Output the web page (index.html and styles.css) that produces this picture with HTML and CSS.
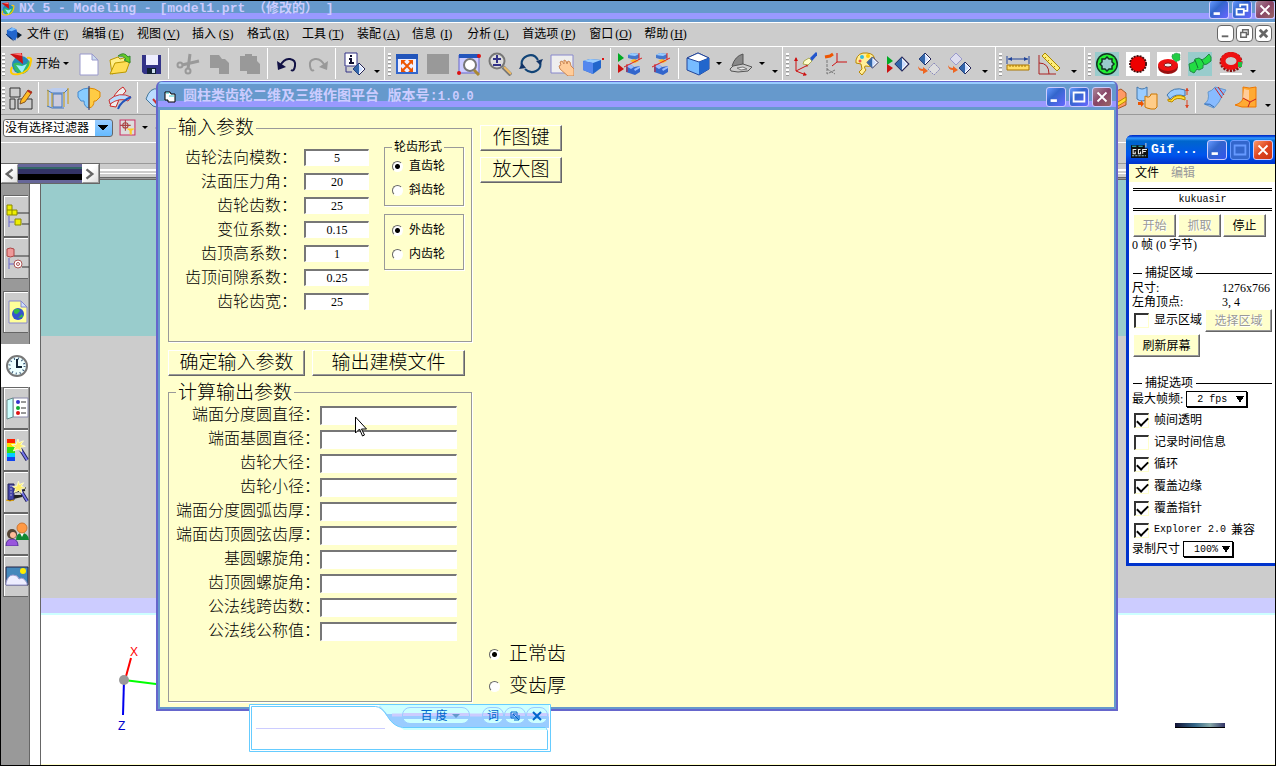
FILE: index.html
```html
<!DOCTYPE html>
<html lang="zh-CN">
<head>
    <meta charset="UTF-8">
    <meta name="viewport" content="width=device-width, initial-scale=1.0">
    <title>NX 5 - Modeling</title>
    <link rel="stylesheet" href="styles.css">
</head>
<body>
    <svg class="sprite" width="0" height="0">
        <symbol id="logo" viewBox="0 0 24 24">
            <circle cx="12" cy="13" r="9" fill="#28b" />
            <path d="M4 12q4-3 8 0t8-4q3 8-3 12-6 4-11-2z" fill="#3b6" />
            <path d="M7 13l6 8 5-9-5 2z" fill="#9ef" />
            <path d="M3 15q-4 9 7 7T22 9q1-4-4-3" fill="none" stroke="#fc0" stroke-width="2" />
            <path d="M1 2l12-1 1 11z" fill="#c11" />
            <path d="M4 2l8-1 1 3z" fill="#f77" />
        </symbol>
        <symbol id="diamond" viewBox="0 0 14 14">
            <path d="M7 1l6 6-6 6-6-6z" fill="#fff" stroke="#225" />
            <path d="M7 1v12L1 7z" fill="#36a" />
            <path d="M7 3l4 4-4 4z" fill="#cdf" />
        </symbol>
        <symbol id="clamp" viewBox="0 0 18 24">
            <path d="M4 3l4-2 7 1v4l-4 2-7-2z" fill="#47c" />
            <path d="M4 3l4-2 7 1-4 2z" fill="#9cf" />
            <path d="M2 14l4-2 4 3 6-1v6l-5 3-9-3z" fill="#36c" />
            <path d="M2 14l4-2 4 3-3 2zM10 17l6-3v2l-5 3z" fill="#9bf" />
            <path d="M6 9l4-2 5 2-4 2z" fill="#fb2" />
            <path d="M0 15L18 6M3 12v8M15 1v7" stroke="#d22" fill="none" />
        </symbol>
        <symbol id="wand" viewBox="0 0 24 24">
            <path d="M14 10l8 13" stroke="#225" stroke-width="4" />
            <path d="M14 10l8 13" stroke="#77e" stroke-width="2" />
            <path d="M12 0l1 4 5-2-3 4 5 2-5 1 1 5-4-3-5 2 2-4-4-3 5 0z" fill="#fe6" stroke="#ffc" />
        </symbol>
    </svg>

    <header class="titlebar">
        <svg class="title-logo" viewBox="0 0 24 24"><use href="#logo" /></svg>
        <h1>NX 5 - Modeling - [model1.prt （修改的） ]</h1>
        <div class="win-buttons">
            <button type="button" aria-label="最小化"><svg viewBox="0 0 20 20"><path d="M4 14h7" stroke-width="3" /></svg></button>
            <button type="button" aria-label="还原"><svg viewBox="0 0 20 20"><path d="M8 7V4h8v7h-3M4 9h8v6H4z" /></svg></button>
            <button type="button" class="close" aria-label="关闭"><svg viewBox="0 0 20 20"><path d="M5 5l10 10M15 5L5 15" /></svg></button>
        </div>
    </header>

    <nav class="menubar">
        <svg class="menu-icon" viewBox="0 0 18 18"><path d="M2 5l5-3 5 2 1 3 4 3-5 3-1 3-5-2-4-3z" fill="#26c" /><path d="M3 5l5-3 4 2-5 2z" fill="#7bf" /><path d="M1 9l6 5M4 12l5 4" stroke="#136" /><path d="M13 7l5 3-5 4z" fill="#123" /></svg>
        <a href="#">文件<span class="key">(<u>F</u>)</span></a>
        <a href="#">编辑<span class="key">(<u>E</u>)</span></a>
        <a href="#">视图<span class="key">(<u>V</u>)</span></a>
        <a href="#">插入<span class="key">(<u>S</u>)</span></a>
        <a href="#">格式<span class="key">(<u>R</u>)</span></a>
        <a href="#">工具<span class="key">(<u>T</u>)</span></a>
        <a href="#">装配<span class="key">(<u>A</u>)</span></a>
        <a href="#">信息<span class="key">(<u>I</u>)</span></a>
        <a href="#">分析<span class="key">(<u>L</u>)</span></a>
        <a href="#">首选项<span class="key">(<u>P</u>)</span></a>
        <a href="#">窗口<span class="key">(<u>O</u>)</span></a>
        <a href="#">帮助<span class="key">(<u>H</u>)</span></a>
        <div class="mdi-buttons">
            <button type="button" aria-label="最小化文档"><svg viewBox="0 0 16 16"><path d="M4 11h7" /></svg></button>
            <button type="button" aria-label="还原文档"><svg viewBox="0 0 16 16"><path d="M6 6V4h6v5h-2M4 7h6v5H4z" stroke-width="1.5" /></svg></button>
            <button type="button" aria-label="关闭文档"><svg viewBox="0 0 16 16"><path d="M4 4l8 8M12 4l-8 8" stroke-width="3" /></svg></button>
        </div>
    </nav>

    <div class="toolbar">
        <div class="group">
            <span class="grip"></span>
            <button type="button" class="tool" aria-label="NX"><svg viewBox="0 0 24 24"><use href="#logo" /></svg></button>
            <button type="button" class="start">开始<i class="caret"></i></button>
            <button type="button" class="tool" aria-label="新建"><svg viewBox="0 0 24 24"><path d="M3 2h12l6 6v15H3z" fill="#fff" stroke="#99c" /><path d="M15 2v6h6z" fill="#cde" stroke="#99c" /></svg></button>
            <button type="button" class="tool" aria-label="打开"><svg viewBox="0 0 24 24"><path d="M2 8l8-3 2 2 7-2v12L4 22z" fill="#fe8" stroke="#b90" /><path d="M2 22l5-11 15-2-4 11z" fill="#fd5" stroke="#b90" /><path d="M10 4q6-5 10 1l2-1v7l-6-3 2-1q-3-4-8-3z" fill="#6c2" stroke="#383" /></svg></button>
            <button type="button" class="tool" aria-label="保存"><svg viewBox="0 0 24 24"><path d="M3 3h19v19H5l-2-2z" fill="#338" /><path d="M7 3h12v10H7z" fill="#eef" /><path d="M8 16h9v6H8z" fill="#123" /><path d="M13 17h3v4h-3z" fill="#cde" /></svg></button>
            <span class="sep"></span>
            <button type="button" class="tool" aria-label="剪切"><svg viewBox="0 0 24 24" fill="none" stroke="#999" stroke-width="2"><circle cx="4" cy="13" r="2.5" /><circle cx="12" cy="19" r="2.5" /><path d="M6 13l17-4M12 17L14 2" stroke-width="3" /></svg></button>
            <button type="button" class="tool" aria-label="复制"><svg viewBox="0 0 24 24"><path d="M3 3h9l3 4h3l4 4v11H12v-6H3z" fill="#999" /></svg></button>
            <button type="button" class="tool" aria-label="粘贴"><svg viewBox="0 0 24 24"><path d="M2 4h5V2h7v2h5v5l3 3v10H9v-3H2z" fill="#999" /></svg></button>
            <span class="sep"></span>
            <button type="button" class="tool" aria-label="撤销"><svg viewBox="0 0 24 24"><path d="M5 14Q9 6 15 7t5 7-4 4" fill="none" stroke="#114" stroke-width="2" /><path d="M2 9l1 9 8-3z" fill="#114" /></svg></button>
            <button type="button" class="tool" aria-label="重做"><svg viewBox="0 0 24 24"><path d="M19 14Q15 6 9 7t-5 7 4 4" fill="none" stroke="#999" stroke-width="2" /><path d="M22 9l-1 9-8-3z" fill="#999" /></svg></button>
            <span class="sep"></span>
            <button type="button" class="tool" aria-label="信息"><svg viewBox="0 0 24 24"><path d="M2 1h12v13H2z" fill="#fff" stroke="#338" /><path d="M8 3v2M6 7h2v4M6 11h5" stroke="#113" stroke-width="2" fill="none" /><path d="M3 15v5h6" stroke="#338" fill="none" /><use href="#diamond" x="9" y="10" width="14" height="14" /></svg></button>
            <button type="button" class="more" aria-label="更多"><i class="caret"></i></button>
        </div>
        <div class="group">
            <span class="grip"></span>
            <button type="button" class="tool" aria-label="适合窗口"><svg viewBox="0 0 24 24"><path d="M2 3h20v18H2z" fill="#eef" stroke="#36c" stroke-width="2" /><path d="M1 2h22v5H1z" fill="#25b" /><path d="M8 10l8 8M16 10l-8 8" stroke="#e50" stroke-width="2" /><path d="M6 8h5l-5 5zM18 8h-5l5 5zM6 20h5l-5-5zM18 20h-5l5-5z" fill="#e50" /></svg></button>
            <button type="button" class="tool" aria-label="选择"><svg viewBox="0 0 24 24"><path d="M1 2h22v20H1z" fill="#999" /></svg></button>
            <button type="button" class="tool" aria-label="缩放窗口"><svg viewBox="0 0 24 24"><path d="M2 3h20v18H2z" fill="#ccf" stroke="#66c" /><path d="M2 2h20v4H2z" fill="#25b" /><circle cx="13" cy="13" r="6" fill="#fff" stroke="#777" stroke-width="2" /><path d="M17 18l5 5" stroke="#a83" stroke-width="3" /><circle cx="2" cy="21" r="2" fill="#d11" /><circle cx="22" cy="4" r="2" fill="#d11" /></svg></button>
            <button type="button" class="tool" aria-label="缩放"><svg viewBox="0 0 24 24"><circle cx="9" cy="9" r="7.5" fill="#ddd" stroke="#777" stroke-width="2" /><path d="M9 3v8M5 7h8M5 13h8" stroke="#338" stroke-width="2" /><path d="M15 15l8 8" stroke="#777" stroke-width="4" /><path d="M16 15l7 7" stroke="#eb6" stroke-width="2" /></svg></button>
            <button type="button" class="tool" aria-label="旋转"><svg viewBox="0 0 24 24" fill="none" stroke="#147" stroke-width="2"><path d="M3 15Q1 7 8 4t11 4M21 9q2 7-4 10T6 17" /><path d="M24 7l-3 6-4-4zM0 17l3-6 4 5z" fill="#136" stroke="none" /></svg></button>
            <button type="button" class="tool" aria-label="平移"><svg viewBox="0 0 24 24"><path d="M1 3h22v18H1z" fill="#eee" stroke="#88c" /><path d="M9 14l2-1-1-3 2-1 2 3V8l2 1 1 3 1-3 2 1 1 4 3 3v7h-6l-8-7z" fill="#fc9" stroke="#c85" /></svg></button>
            <button type="button" class="tool" aria-label="透视"><svg viewBox="0 0 24 24"><path d="M2 9l7-2 11 1v8l-8 6-10-4z" fill="#26c" /><path d="M2 9l7-2 11 1-8 3z" fill="#9cf" /><path d="M2 9l10 2v11L2 18z" fill="#58e" /><path d="M21 6h2v2h-2z" fill="#d11" /></svg></button>
            <span class="sep"></span>
            <button type="button" class="tool" aria-label="显示截面"><svg viewBox="0 0 24 24"><path d="M0 1v9l6-4z" fill="#0a2" /><path d="M0 12v9l6-4z" fill="#c11" /><use href="#clamp" x="6" y="0" width="18" height="24" /></svg></button>
            <button type="button" class="tool" aria-label="编辑截面"><svg viewBox="0 0 24 24"><use href="#clamp" x="3" y="0" width="18" height="24" /></svg></button>
            <span class="sep"></span>
            <button type="button" class="tool" aria-label="着色"><svg viewBox="0 0 24 24"><path d="M1 6l11-5 11 5v11l-10 6-12-5z" fill="#7bf" stroke="#249" /><path d="M1 6l11-5 11 5-10 4z" fill="#fff" stroke="#249" /><path d="M13 10l10-4v11l-10 6z" fill="#26c" /></svg></button>
            <button type="button" class="drop" aria-label="着色选项"><i class="caret"></i></button>
            <button type="button" class="tool" aria-label="面分析"><svg viewBox="0 0 24 24"><path d="M3 14Q6 4 14 2v10L5 16z" fill="#888" stroke="#555" /><path d="M1 17l3-3 10-2 9 3-4 4-10 1-7-1z" fill="#ccc" stroke="#555" /><path d="M8 16l6-1 4 2-6 1z" fill="#eee" stroke="#777" /></svg></button>
            <button type="button" class="drop" aria-label="面分析选项"><i class="caret"></i></button>
            <button type="button" class="more" aria-label="更多"><i class="caret"></i></button>
        </div>
        <div class="group">
            <span class="grip"></span>
            <button type="button" class="tool" aria-label="动态坐标"><svg viewBox="0 0 24 24"><path d="M3 6v13l12-6M3 19l10 4" fill="none" stroke="#c11" /><path d="M1 9l2-4 2 4zM12 12h4l-2 3zM11 20l3 3-4 1z" fill="#c11" /><path d="M11 9l5-3 3 3-4 4-5-1z" fill="#ffc" stroke="#aa5" /><path d="M17 6l6-6 2 2-6 7z" fill="#25c" /></svg></button>
            <button type="button" class="tool" aria-label="坐标原点"><svg viewBox="0 0 24 24" fill="none"><path d="M13 1v9h10M13 10l-5 4" stroke="#c11" /><path d="M3 8v14l8-4M3 17l8 5" stroke="#777" stroke-dasharray="3 1" /><path d="M1 5l5-1 3-2" stroke="#e50" stroke-width="3" /></svg></button>
            <button type="button" class="tool" aria-label="对象显示"><svg viewBox="0 0 24 24"><path d="M1 8Q3 0 12 1t7 8-8 5q-3 0 0 4l-4 5-3-3 3-3-1-5-5-1z" fill="#fe9" stroke="#b80" /><circle cx="7" cy="5" r="2" fill="#3bd" /><circle cx="13" cy="4" r="2" fill="#fc0" /><circle cx="5" cy="9" r="1.5" fill="#e54" /><use href="#diamond" x="11" y="4" width="13" height="13" /></svg></button>
            <button type="button" class="tool" aria-label="显示和隐藏"><svg viewBox="0 0 24 24"><path d="M1 4v9l6-4z" fill="#0a2" /><path d="M1 12v9l6-5z" fill="#c11" /><use href="#diamond" x="8" y="4" width="16" height="16" /></svg></button>
            <button type="button" class="tool" aria-label="隐藏"><svg viewBox="0 0 24 24"><use href="#diamond" x="1" y="0" width="14" height="14" /><path d="M17 11l6 6-6 6-6-6z" fill="#ddd" stroke="#88b" stroke-dasharray="2 1" /><path d="M1 14q1 3 5 3v-2l5 4-5 3v-3q-5 0-5-5z" fill="#e62" /></svg></button>
            <button type="button" class="tool" aria-label="显示"><svg viewBox="0 0 24 24"><path d="M8 1l6 6-6 6-6-6z" fill="#dde" stroke="#99c" /><use href="#diamond" x="10" y="9" width="14" height="14" /><path d="M0 13q1 3 5 3v-2l5 4-5 3v-3q-5 0-5-5z" fill="#e62" /></svg></button>
            <button type="button" class="more wide" aria-label="更多"><i class="caret"></i></button>
        </div>
        <div class="group">
            <span class="grip"></span>
            <button type="button" class="tool" aria-label="测量距离"><svg viewBox="0 0 24 24"><path d="M1 4v8M23 4v8M2 7h20" stroke="#249" fill="none" /><path d="M2 7l4-2v4zM22 7l-4-2v4z" fill="#249" /><path d="M1 13h22v5H1z" fill="#fd6" stroke="#a70" /><path d="M4 13v2M7 13v2M10 13v2M13 13v2M16 13v2M19 13v2" stroke="#a70" /></svg></button>
            <button type="button" class="tool" aria-label="测量角度"><svg viewBox="0 0 24 24"><path d="M2 3v19h17M2 11q10 0 10 11" fill="none" stroke="#a22" /><path d="M5 4l3-3 15 15-3 3z" fill="#fe7" stroke="#a80" /><path d="M9 5l-2 2M12 8l-2 2M15 11l-2 2M18 14l-2 2" stroke="#a80" /></svg></button>
            <button type="button" class="more wide" aria-label="更多"><i class="caret"></i></button>
        </div>
        <div class="group">
            <span class="grip"></span>
            <button type="button" class="tool" aria-label="内齿轮"><svg viewBox="0 0 24 24"><path d="M0 0h24v24H0z" fill="#9cc" /><circle cx="12" cy="12" r="11" fill="#132" /><circle cx="12" cy="12" r="9.5" fill="#2e3" /><path d="M12 5l2 2 3 0 0 3 2 2-2 2 0 3-3 0-2 2-2-2-3 0 0-3-2-2 2-2 0-3 3 0z" fill="#9cc" stroke="#132" stroke-width="1.5" /></svg></button>
            <button type="button" class="tool" aria-label="外齿轮"><svg viewBox="0 0 24 24"><path d="M0 0h24v24H0z" fill="#fff" /><circle cx="12" cy="12" r="8" fill="#e00" stroke="#411" stroke-width="2" stroke-dasharray="2 1" /><circle cx="12" cy="12" r="7" fill="#e00" /></svg></button>
            <button type="button" class="tool" aria-label="锥齿轮"><svg viewBox="0 0 24 24"><path d="M0 0h24v24H0z" fill="#fff" /><ellipse cx="11" cy="15" rx="10" ry="7" fill="#911" /><ellipse cx="11" cy="13" rx="10" ry="6" fill="#e11" /><ellipse cx="11" cy="13" rx="4" ry="2" fill="#eee" stroke="#811" /><path d="M15 3l4-2 4 1v6l-4 2-4-4z" fill="#2c4" stroke="#385" stroke-dasharray="1 1" /></svg></button>
            <button type="button" class="tool" aria-label="齿轮轴"><svg viewBox="0 0 24 24"><path d="M0 0h24v24H0z" fill="#9cc" /><path d="M1 12l5-2 1-3 4-1 3 2 3-2 4-4 2 3v4l-4 3-4 1 0 3-4 2-2-1-3 4-4-2z" fill="#2d4" stroke="#284" /><path d="M7 8l3 8M13 7l3 5" stroke="#173" /></svg></button>
            <button type="button" class="tool" aria-label="齿圈"><svg viewBox="0 0 24 24"><path d="M1 21h22v2H1z" fill="#fff" /><ellipse cx="12" cy="10" rx="9" ry="7.5" fill="none" stroke="#811" stroke-width="5" stroke-dasharray="2 1" /><ellipse cx="12" cy="9" rx="8" ry="6.5" fill="none" stroke="#e11" stroke-width="5" /><path d="M19 10h4v5h-4z" fill="#2b4" /></svg></button>
            <button type="button" class="more" aria-label="更多"><i class="caret"></i></button>
        </div>
    </div>

    <div class="toolbar second">
        <span class="grip"></span>
        <button type="button" class="tool" aria-label="草图"><svg viewBox="0 0 24 24"><path d="M1 2h10v9H1zM1 13h5v10H1zM9 13h14v10H9z" fill="#ccc" stroke="#333" /><path d="M12 14l7-10 4 2-7 10-5 2z" fill="#fb2" stroke="#852" /><path d="M19 4l4 2-1 2-4-3z" fill="#b22" /></svg></button>
        <span class="sep"></span>
        <button type="button" class="tool" aria-label="拉伸"><svg viewBox="0 0 24 24"><path d="M1 4l6-2h15v16l-4 4H7l-6-2z" fill="#bce" /><path d="M7 8h9v13H7z" fill="#ccd" stroke="#47b" /><path d="M1 4l5 3h12l4-4M1 20l5 2h12" stroke="#47b" fill="none" /><path d="M2 4v16M6 7v14M18 6v15M22 2v16" stroke="#c90" /></svg></button>
        <button type="button" class="tool" aria-label="回转"><svg viewBox="0 0 24 24"><path d="M1 6q5-4 11-4v20q-5-1-5-7H4l-3-4z" fill="#8cf" stroke="#48c" /><path d="M12 2q6 0 11 4v5l-4 4h-2q0 6-5 7z" fill="#fc4" stroke="#d80" /><path d="M12 0v24" stroke="#237" /></svg></button>
        <button type="button" class="tool" aria-label="扫掠"><svg viewBox="0 0 24 24"><path d="M2 20Q6 6 15 1l3 4Q10 12 8 21z" fill="#eee" stroke="#c22" /><path d="M1 14q10-9 22-3l-3 4q-8-4-18 3z" fill="#bdf" stroke="#c33" /><path d="M10 23q3-8 13-12" fill="none" stroke="#25b" stroke-width="2" /></svg></button>
        <span class="sep"></span>
        <button type="button" class="tool" aria-label="孔"><svg viewBox="0 0 24 24"><path d="M1 13q4-12 12-10l10 7-8 12-7-2z" fill="#bdf" stroke="#479" /><path d="M8 13l6 7" stroke="#c33" stroke-width="2" /></svg></button>
        <div class="push">
            <button type="button" class="tool" aria-label="偏置面"><svg viewBox="0 0 24 24"><path d="M8 7l9-4 5 4v12l-9 4-5-4z" fill="#f96" stroke="#a52" /><path d="M8 12l6 4 8-5v4l-8 5-6-4z" fill="#fd3" stroke="#b80" /></svg></button>
            <button type="button" class="tool" aria-label="抽取几何体"><svg viewBox="0 0 24 24"><path d="M2 1q5 4 10 0v12q-5 4-10 0z" fill="#9cf" stroke="#47a" /><path d="M10 10q5 3 6-2h6v13q-1 3-6 2t-6-2z" fill="#fc8" stroke="#c70" /><path d="M3 16h3v-2l3 4-3 3v-2H3z" fill="#e50" /></svg></button>
            <button type="button" class="tool" aria-label="加厚"><svg viewBox="0 0 24 24"><path d="M1 9q6-9 18-5v6Q9 7 4 13z" fill="#9cf" stroke="#47a" /><path d="M2 13l3 1q5-7 14-3v3q-9-4-13 2l-4-1z" fill="#fd3" stroke="#b80" /><path d="M21 2v7M21 14v8" stroke="#d42" /><path d="M19 5l2-3 2 3zM19 19l2 3 2-3z" fill="#d42" /></svg></button>
            <span class="sep"></span>
            <button type="button" class="tool" aria-label="修剪"><svg viewBox="0 0 24 24"><path d="M5 6Q9 5 12 1l11 3-4 6q-2 6-8 12L1 18q6-3 4-12z" fill="#8bf" stroke="#69c" /><path d="M12 2l7 10M15 1l6 8" stroke="#c22" fill="none" /><path d="M2 18q5-1 9 3" stroke="#36a" fill="none" /></svg></button>
            <button type="button" class="tool" aria-label="桥接"><svg viewBox="0 0 24 24"><path d="M9 1q6 2 13 0v20H8L1 19q7-2 8-7z" fill="#fa3" stroke="#e70" /><path d="M10 3q3 1 5 1v10l-6-2z" fill="#fc9" /><path d="M9 12l7 4 6-3M16 16l-2 5" stroke="#c22" fill="none" /></svg></button>
            <button type="button" class="more" aria-label="更多"><i class="caret"></i></button>
        </div>
    </div>

    <div class="filterbar">
        <select class="filter" aria-label="选择过滤器"><option>没有选择过滤器</option></select>
        <button type="button" class="snap" aria-label="捕捉过滤"><svg viewBox="0 0 16 16"><path d="M1 1h14v14H1z" fill="#ddd" stroke="#c36" /><circle cx="6" cy="6" r="2.5" fill="none" stroke="#a44" /><path d="M6 1v10M1 6h10" stroke="#a44" /><path d="M7 9h8l-3 2v4l-2-1v-3z" fill="#fc2" /></svg></button>
        <i class="caret"></i>
        <svg class="dim" viewBox="0 0 12 12"><path d="M1 6l4-4v2h6v4H5v2z" fill="#999" /></svg>
    </div>
    <div class="statusbar"></div>
    <div class="tabstrip">
        <div class="tabs">
            <button type="button" aria-label="向左"><svg viewBox="0 0 12 12"><path d="M9 2L4 6l5 4" /></svg></button>
            <span class="tab-track"></span>
            <button type="button" aria-label="向右"><svg viewBox="0 0 12 12"><path d="M3 2l5 4-5 4" /></svg></button>
        </div>
        <span class="tab-lines"></span>
    </div>

    <main class="workspace">
        <aside class="rail">
            <button type="button" aria-label="装配导航器"><svg viewBox="0 0 24 24"><path d="M12 9h12M17 20h7" stroke="#333" /><path d="M2 1h5v5h5v5H2zM2 6h5v5" fill="#ee0" stroke="#880" /><path d="M4 12v11M4 18h5" stroke="#66c" /><path d="M10 15h6v6h-6z" fill="#ee0" stroke="#880" /></svg></button>
            <button type="button" aria-label="部件导航器"><svg viewBox="0 0 24 24"><path d="M9 10h15M17 21h7" stroke="#333" /><path d="M2 3q3-2 7 0v7q-4 2-7 0z" fill="#e99" stroke="#a44" /><path d="M4 12v11M4 18h5" stroke="#66c" /><circle cx="13" cy="18" r="4" fill="#fff" stroke="#a55" /><circle cx="13" cy="18" r="1.5" fill="none" stroke="#a55" /></svg></button>
            <button type="button" class="gap" aria-label="浏览器"><svg viewBox="0 0 24 24"><path d="M4 1h12l6 6v16H4z" fill="#ff9" stroke="#88c" /><path d="M16 1v6h6z" fill="#cdf" stroke="#88c" /><circle cx="13" cy="14" r="6" fill="#35c" /><path d="M9 10q5-3 6 1l-3 3q-4 0-3-4zM13 18l4-4 1 3z" fill="#3b4" /></svg></button>
            <button type="button" class="active" aria-label="历史记录"><svg viewBox="0 0 24 24"><circle cx="12" cy="12" r="10" fill="#eff" stroke="#777" stroke-width="2" /><circle cx="12" cy="12" r="7.5" fill="none" stroke="#357" stroke-width="2" stroke-dasharray="1 3" /><path d="M12 5v8h5" fill="none" stroke="#123" stroke-width="2" /></svg></button>
            <button type="button" aria-label="系统材料"><svg viewBox="0 0 24 24"><path d="M8 2h15v19H8z" fill="#fff" stroke="#88a" /><path d="M2 4l6-2v19l-6 2z" fill="#cff" stroke="#688" /><path d="M16 6h5M16 12h5M16 17h5" stroke="#333" /><circle cx="13" cy="6" r="2" fill="#33c" /><circle cx="13" cy="12" r="2" fill="#1a3" /><circle cx="13" cy="17" r="2" fill="#d11" /></svg></button>
            <button type="button" aria-label="可视化"><svg viewBox="0 0 24 24"><path d="M2 1h8v5H2z" fill="#f20" /><path d="M2 5h8v5H2z" fill="#fd0" /><path d="M2 9h8v6H2z" fill="#3d1" /><path d="M2 15h8v4H2z" fill="#0cf" /><path d="M2 19h8v4H2z" fill="#14e" /><use href="#wand" x="2" y="0" width="22" height="24" /></svg></button>
            <button type="button" aria-label="场景"><svg viewBox="0 0 24 24"><path d="M9 8h12M8 12l12-2M8 16h9l-9 2" stroke="#222" stroke-width="2" /><path d="M3 4h6v16H3z" fill="#44a" stroke="#225" /><path d="M5 6h2M5 9h2M5 12h2M5 15h2" stroke="#aac" /><path d="M1 20l4 1 4-1" stroke="#ea0" /><use href="#wand" x="3" y="0" width="21" height="23" /></svg></button>
            <button type="button" aria-label="角色"><svg viewBox="0 0 24 24"><path d="M11 18q0-7 6-7t7 7z" fill="#183" /><path d="M15 11l2 4 2-4z" fill="#fff" /><circle cx="17" cy="6" r="5" fill="#f94" stroke="#c73" /><path d="M1 24q0-7 6-7t6 7z" fill="#95d" stroke="#539" /><circle cx="7" cy="12" r="5" fill="#543" /><circle cx="8" cy="13" r="3" fill="#fb9" /></svg></button>
            <button type="button" aria-label="背景"><svg viewBox="0 0 24 24"><path d="M1 3h22v18H1z" fill="#48b" stroke="#224" /><circle cx="18" cy="7" r="3" fill="#fe0" /><path d="M1 19q2-8 7-8t6 4q4-3 8 4v2H1z" fill="#eef" stroke="#99c" /></svg></button>
        </aside>
        <div class="gutter"></div>
        <section class="canvas">
            <div class="band teal"></div>
            <div class="band grey"></div>
            <div class="band lilac"></div>
            <div class="band floor">
                <svg class="axes" viewBox="0 0 50 90">
                    <path d="M11 33l6-22" stroke="#f00" stroke-width="2" />
                    <path d="M10 33l40 5" stroke="#0f0" stroke-width="2" />
                    <path d="M10 33l-1 35" stroke="#00e" stroke-width="2" />
                    <circle cx="10" cy="33" r="5" fill="#999" />
                    <text x="16" y="9" fill="#f00">X</text>
                    <text x="4" y="83" fill="#00c">Z</text>
                </svg>
                <span class="scrap"></span>
            </div>
        </section>
    </main>

    <form class="dialog">
        <header class="dialog-title">
            <svg class="form-icon" viewBox="0 0 12 12"><path d="M1 1h5l1 2h4v8H4V9H1z" fill="#fff" stroke="#000" /><path d="M2 2h3M5 5h5" stroke="#3cc" /></svg>
            <h2>圆柱类齿轮二维及三维作图平台 版本号:<span>1.0.0</span></h2>
            <div class="win-buttons">
                <button type="button" aria-label="最小化"><svg viewBox="0 0 20 20"><path d="M4 14h7" stroke-width="3" /></svg></button>
                <button type="button" aria-label="最大化"><svg viewBox="0 0 20 20"><path d="M4 5h12v10H4z" /></svg></button>
                <button type="button" class="close" aria-label="关闭"><svg viewBox="0 0 20 20"><path d="M5 5l10 10M15 5L5 15" /></svg></button>
            </div>
        </header>
        <div class="dialog-body">
            <div class="left">
                <fieldset class="frame inputs">
                    <legend>输入参数</legend>
                    <div class="inputs-row">
                        <div class="fields">
                            <label for="mn">齿轮法向模数：</label><input type="text" id="mn" value="5">
                            <label for="alpha">法面压力角：</label><input type="text" id="alpha" value="20">
                            <label for="z">齿轮齿数：</label><input type="text" id="z" value="25">
                            <label for="x">变位系数：</label><input type="text" id="x" value="0.15">
                            <label for="ha">齿顶高系数：</label><input type="text" id="ha" value="1">
                            <label for="c">齿顶间隙系数：</label><input type="text" id="c" value="0.25">
                            <label for="b">齿轮齿宽：</label><input type="text" id="b" value="25">
                        </div>
                        <div class="choices">
                            <fieldset class="frame small">
                                <legend>轮齿形式</legend>
                                <label><input type="radio" name="form" checked>直齿轮</label>
                                <label><input type="radio" name="form">斜齿轮</label>
                            </fieldset>
                            <fieldset class="frame small">
                                <label><input type="radio" name="side" checked>外齿轮</label>
                                <label><input type="radio" name="side">内齿轮</label>
                            </fieldset>
                        </div>
                    </div>
                </fieldset>
                <div class="actions">
                    <button type="button" class="btn">确定输入参数</button>
                    <button type="button" class="btn long">输出建模文件</button>
                </div>
                <fieldset class="frame outputs">
                    <legend>计算输出参数</legend>
                    <div class="fields">
                        <label for="d">端面分度圆直径：</label><input type="text" id="d">
                        <label for="db">端面基圆直径：</label><input type="text" id="db">
                        <label for="da">齿轮大径：</label><input type="text" id="da">
                        <label for="df">齿轮小径：</label><input type="text" id="df">
                        <label for="s">端面分度圆弧齿厚：</label><input type="text" id="s">
                        <label for="sa">端面齿顶圆弦齿厚：</label><input type="text" id="sa">
                        <label for="bb">基圆螺旋角：</label><input type="text" id="bb">
                        <label for="ba">齿顶圆螺旋角：</label><input type="text" id="ba">
                        <label for="k">公法线跨齿数：</label><input type="text" id="k">
                        <label for="w">公法线公称值：</label><input type="text" id="w">
                    </div>
                </fieldset>
            </div>
            <div class="right">
                <button type="button" class="btn">作图键</button>
                <button type="button" class="btn">放大图</button>
                <div class="thickness">
                    <label><input type="radio" name="tooth" checked>正常齿</label>
                    <label><input type="radio" name="tooth">变齿厚</label>
                </div>
            </div>
        </div>
    </form>

    <section class="gif">
        <header class="gif-title">
            <svg class="gif-icon" viewBox="0 0 16 14"><path d="M0 2h13v3h3v9H0z" fill="#111" /><path d="M5 6H2v4h2V8M9 6H7v4h2V8M11 10V6h4M11 8h3" fill="none" stroke="#eee" /><path d="M1 3h4M7 3h4" stroke="#3cc" /><path d="M1 12h13" stroke="#9cc" stroke-dasharray="2 1" /><path d="M14 0v4" stroke="#ccc" /></svg>
            <h2>Gif...</h2>
            <div class="win-buttons xp">
                <button type="button" aria-label="最小化"><svg viewBox="0 0 20 20"><path d="M4 14h7" stroke-width="3" /></svg></button>
                <button type="button" class="off" aria-label="最大化"><svg viewBox="0 0 20 20"><path d="M4 5h12v10H4z" /></svg></button>
                <button type="button" class="close" aria-label="关闭"><svg viewBox="0 0 20 20"><path d="M5 5l10 10M15 5L5 15" /></svg></button>
            </div>
        </header>
        <nav class="gif-menu"><a href="#">文件</a><a href="#" class="off">编辑</a></nav>
        <div class="gif-body">
            <p class="user mono">kukuasir</p>
            <div class="gif-actions">
                <button type="button" class="btn" disabled>开始</button>
                <button type="button" class="btn" disabled>抓取</button>
                <button type="button" class="btn">停止</button>
            </div>
            <p class="frames">0 帧 (0 字节)</p>
            <h3>捕捉区域</h3>
            <dl>
                <dt>尺寸:</dt><dd>1276x766</dd>
                <dt>左角顶点:</dt><dd>3, 4</dd>
            </dl>
            <div class="region">
                <label class="check"><input type="checkbox">显示区域</label>
                <button type="button" class="btn" disabled>选择区域</button>
            </div>
            <button type="button" class="btn refresh">刷新屏幕</button>
            <h3>捕捉选项</h3>
            <div class="pick"><label for="fps">最大帧频:</label><select id="fps" class="mono fps"><option>2 fps</option></select></div>
            <label class="check"><input type="checkbox" checked>帧间透明</label>
            <label class="check"><input type="checkbox">记录时间信息</label>
            <label class="check"><input type="checkbox" checked>循环</label>
            <label class="check"><input type="checkbox" checked>覆盖边缘</label>
            <label class="check"><input type="checkbox" checked>覆盖指针</label>
            <label class="check"><input type="checkbox" checked><span class="mono">Explorer 2.0</span>兼容</label>
            <div class="pick"><label for="scale">录制尺寸</label><select id="scale" class="mono"><option>100%</option></select></div>
        </div>
    </section>

    <section class="baidu">
        <svg class="swoosh" viewBox="0 0 302 48">
            <path d="M130 2h170v22H152q-8 0-13-9t-9-13z" fill="#9cf" />
            <path d="M130 1h170v9H138z" fill="#cff" />
            <path d="M143 11h157" stroke="#ccf" stroke-width="3" />
            <path d="M2.500 2.500h124q6 0 12 10t15 11h143l2 3v19h-296z" fill="#fff" stroke="#6cf" />
            <path d="M152 24h145v2H155z" fill="#cff" />
            <path d="M7 24.500h129" stroke="#ccf" />
            <path d="M.5.5h301v47H.5z" fill="none" stroke="#6cf" />
        </svg>
        <div class="baidu-bar">
            <button type="button" class="pill name">百 度<i class="caret"></i></button>
            <button type="button" class="pill">词</button>
            <button type="button" class="pill" aria-label="展开"><svg viewBox="0 0 10 10"><path d="M1 1h6v6H1zM3 3l6 6M3 3h3M3 3v3M9 4v5H4" /></svg></button>
            <button type="button" class="pill" aria-label="关闭"><svg viewBox="0 0 10 10"><path d="M1 1l8 8M9 1L1 9" stroke-width="2" /></svg></button>
        </div>
    </section>

    <svg class="cursor" viewBox="0 0 12 21"><path d="M.5 1v16l4-4 3 7 2-1-3-6h5z" fill="#fff" stroke="#000" /></svg>
</body>
</html>
```

FILE: styles.css
```css
* {
    box-sizing: border-box;
}
body {
    position: relative;
    display: flex;
    flex-direction: column;
    min-height: 100vh;
    margin: 0;
    overflow: hidden;
    border: 1px solid #000;
    background: #ccc;
    color: #000;
    font: 12px/16px "Liberation Serif", "Noto Sans CJK SC", serif;
}
button, input, select {
    margin: 0;
    padding: 0;
    border: 0;
    background: none;
    color: inherit;
    font: inherit;
}
svg {
    display: block;
    flex: none;
    overflow: hidden;
}
.sprite {
    position: absolute;
}
a {
    color: inherit;
    text-decoration: none;
}
h1, h2, h3, p, dl, dd {
    margin: 0;
    font-size: inherit;
}
.mono {
    font-family: "Liberation Mono", "Noto Sans CJK SC", monospace;
    font-size: 10px;
}
.caret {
    flex: none;
    border: 3px solid transparent;
    border-top-color: #000;
    border-bottom: 0;
}

/* main window title */
.titlebar {
    display: flex;
    align-items: flex-start;
    height: 21px;
    background: linear-gradient(#69c 12px, #99f 12px, #99f 18px, #69c 18px);
    color: #ccf;
}
.title-logo {
    width: 14px;
    height: 16px;
}
.titlebar h1 {
    flex: 1;
    margin-left: 4px;
    font: bold 13px/16px "Liberation Mono", "Noto Sans CJK SC", monospace;
    white-space: pre;
}
.win-buttons {
    display: flex;
    gap: 3px;
}
.win-buttons button {
    width: 20px;
    height: 20px;
    border: 1px solid #ccf;
    border-radius: 3px;
    background: linear-gradient(135deg, #69f, #36c 40%, #66f);
}
.win-buttons svg {
    width: 18px;
    height: 18px;
    fill: none;
    stroke: #fff;
    stroke-width: 2;
}
.win-buttons .close {
    background: linear-gradient(135deg, #a89, #846 50%, #966);
}
.titlebar .win-buttons button {
    height: 18px;
    border-top: 0;
}

/* menu */
.menubar {
    display: flex;
    align-items: center;
    gap: 13px;
    height: 24px;
    padding: 0 3px 2px 4px;
    border-top: 1px solid #fff;
}
.menu-icon {
    width: 17px;
    height: 18px;
    margin-right: -8px;
}
.key {
    display: inline-block;
    width: 18px;
    padding-left: 2px;
    text-align: center;
}
.mdi-buttons {
    display: flex;
    gap: 2px;
    margin-left: auto;
}
.mdi-buttons button {
    width: 17px;
    height: 17px;
    border: 1px solid #666;
    border-radius: 4px;
    background: #fff;
}
.mdi-buttons svg {
    width: 15px;
    height: 15px;
    fill: none;
    stroke: #666;
    stroke-width: 2;
}

/* toolbars */
.toolbar {
    display: flex;
    height: 34px;
    border-top: 1px solid #fff;
}
.group, .push {
    display: flex;
}
.group + .group {
    padding-left: 2px;
    border-left: 1px solid #fff;
}
.push {
    margin-left: auto;
}
.grip {
    width: 4px;
    margin: 6px 0 4px;
    background: repeating-linear-gradient(#fff 0 2px, #999 2px 3px, #ccc 3px 4px) 1px 0 / 3px 100% no-repeat;
}
.tool {
    display: flex;
    align-items: center;
    justify-content: center;
    width: 31px;
}
.tool svg {
    width: 24px;
    height: 24px;
}
.start {
    display: flex;
    align-items: center;
    gap: 3px;
    width: 37px;
    white-space: nowrap;
}
.sep {
    width: 6px;
    margin: 1px 0;
    background: linear-gradient(#fff, #fff) 2px 0 / 1px 100% no-repeat;
}
.drop, .more {
    display: flex;
    align-items: center;
    justify-content: center;
    width: 12px;
}
.more {
    width: 14px;
    align-items: flex-end;
    padding-bottom: 7px;
}
.more.wide {
    width: 20px;
}
.filterbar {
    display: flex;
    align-items: center;
    gap: 6px;
    height: 28px;
    padding: 0 2px 2px;
    border-top: 1px solid #999;
}
.filter {
    width: 110px;
    height: 18px;
    padding-left: 1px;
    border: 1px solid #666;
    border-radius: 3px;
    appearance: none;
    background:
        conic-gradient(from -45deg at 50% 100%, #000 90deg, transparent 0) right 3px top 5px / 12px 6px no-repeat,
        linear-gradient(#9cf, #6bf) right / 17px 100% no-repeat,
        #fff;
}
/* the wedge opens upward, so its tip is the foot of the arrow */
.snap svg {
    width: 17px;
    height: 17px;
}
.dim {
    width: 12px;
    height: 12px;
}
.statusbar {
    height: 21px;
    border-top: 1px solid #fff;
}
.tabstrip {
    display: flex;
    align-items: flex-start;
    height: 17px;
}
.tabs {
    display: flex;
    z-index: 1;
    height: 21px;
    margin-bottom: -4px;
    border: 1px solid #666;
    border-left: 0;
    background: #ccc;
}
.tabs button {
    width: 17px;
    border: 1px solid #fff;
    border-right-color: #999;
    border-bottom-color: #999;
    background: linear-gradient(135deg, #fff 40%, #ddd);
}
.tabs svg {
    width: 14px;
    height: 16px;
    fill: none;
    stroke: #666;
    stroke-width: 2;
}
.tab-track {
    width: 64px;
    background: linear-gradient(#669 3px, #366 3px 5px, #336 5px 10px, #000 10px 16px, #669 16px);
}
.tab-lines {
    flex: 1;
    height: 17px;
    background: linear-gradient(#999 1px, #ccc 1px 6px, #fff 6px 8px, #ccc 8px 10px, #fff 10px 11px, #ccc 11px 14px, #666 14px 15px, #999 15px 16px, #666 16px);
}

/* work area */
.workspace {
    display: flex;
    flex: 1;
}
.rail {
    display: flex;
    flex-direction: column;
    width: 29px;
    padding: 15px 1px 0 2px;
    border-right: 1px solid #666;
    background: #999;
}
.rail button {
    display: flex;
    align-items: center;
    height: 42px;
    border: 1px solid #666;
    border-right: 0;
    box-shadow: inset 1px 1px #fff;
    background: #ccc;
}
.rail svg {
    width: 24px;
    height: 24px;
    margin-left: 1px;
}
.rail .gap {
    margin: 12px 0 11px;
}
.rail .active {
    height: 43px;
    margin: 0 -2px;
    padding-left: 2px;
    border-color: #fff;
    background: #fff;
}
.gutter {
    width: 11px;
    border-right: 1px solid #666;
    background: #fff;
}
.canvas {
    display: flex;
    flex: 1;
    flex-direction: column;
}
.teal {
    height: 156px;
    background: #9cc;
}
.grey {
    height: 262px;
}
.lilac {
    height: 17px;
    border-bottom: 2px solid #cff;
    background: #ccf;
}
.floor {
    display: flex;
    flex: 1;
    justify-content: space-between;
    padding: 32px 50px 0 73px;
    border-bottom: 1px solid #ffc;
    background: #fff;
}
.axes {
    width: 50px;
    height: 90px;
    overflow: visible;
    font: 12px "Liberation Sans", sans-serif;
}
.scrap {
    width: 50px;
    height: 5px;
    margin-top: 76px;
    border-bottom: 1px solid #000;
    background: linear-gradient(90deg, #113, #368 40%, #8aa 70%, #336);
}

/* gear dialog */
.dialog {
    position: absolute;
    top: 80px;
    right: 157px;
    left: 155px;
    border: 2px solid #66c;
    border-top: 0;
    border-radius: 6px 6px 0 0;
    background: #69c;
}
.dialog-title {
    display: flex;
    align-items: center;
    height: 29px;
    padding: 2px 4px 0 6px;
    border-radius: 6px 6px 0 0;
    background: linear-gradient(#66c 1px, #9cf 1px 3px, #69c 3px 20px, #99f 20px 26px, #69c 26px);
    color: #ccf;
}
.form-icon {
    width: 12px;
    height: 12px;
}
.dialog-title h2 {
    flex: 1;
    margin-left: 7px;
    font: bold 14px/16px "Liberation Mono", "Noto Sans CJK SC", monospace;
}
.dialog-title span {
    font-size: 12px;
}
.dialog-body {
    display: flex;
    gap: 8px;
    height: 597px;
    margin: 0 2px 2px;
    padding: 8px 8px 5px;
    background: #ffc;
    font-weight: 300;
}
.frame {
    min-width: 0;
    margin: 0;
    padding: 0 7px;
    border: 1px solid #999;
    box-shadow: 1px 1px #fff;
}
.frame legend {
    margin-left: 0;
    padding: 0 2px;
    font-size: 19px;
    line-height: 20px;
}
.left {
    display: flex;
    flex-direction: column;
    width: 304px;
}
.inputs {
    height: 224px;
}
.inputs-row {
    display: flex;
    justify-content: space-between;
}
.fields {
    display: grid;
    grid-template-columns: 1fr auto;
    column-gap: 7px;
    row-gap: 7px;
    align-items: center;
    padding-top: 11px;
    font-size: 16px;
    text-align: right;
    white-space: nowrap;
}
.fields label {
    line-height: 16px;
}
.fields input {
    width: 65px;
    height: 17px;
    border: 1px solid #fff;
    border-top: 2px solid #777;
    border-left: 2px solid #777;
    background: #fff;
    font-size: 12px;
    line-height: 14px;
    text-align: center;
}
.inputs .fields {
    width: 193px;
}
.outputs {
    height: 320px;
    margin-top: 7px;
}
.outputs .fields {
    column-gap: 0;
    row-gap: 5px;
    padding: 3px 8px 0 0;
}
.outputs .fields input {
    width: 137px;
    height: 19px;
}
.choices {
    width: 80px;
    padding-top: 2px;
    font-weight: normal;
}
.small {
    height: 66px;
    padding: 4px 7px 0;
}
.small legend {
    font-size: 12px;
    line-height: 14px;
}
.small + .small {
    height: 56px;
    margin-top: 8px;
    padding-top: 3px;
}
.choices .small:first-child {
    padding-top: 0;
}
.small label {
    display: flex;
    align-items: center;
    gap: 6px;
    height: 24px;
}
input[type="radio"] {
    flex: none;
    width: 11px;
    height: 11px;
    border: 1px solid;
    border-color: #666 #fff #fff #666;
    border-radius: 50%;
    appearance: none;
    background: #fff;
}
input[type="radio"]:checked {
    background: radial-gradient(#000 2px, #fff 3px);
}
.actions {
    display: flex;
    gap: 7px;
    margin-top: 8px;
}
.btn {
    height: 26px;
    border: 1px solid;
    border-color: #fff #666 #666 #fff;
    box-shadow: inset -1px -1px #999;
    background: #ffc;
    font-size: 19px;
    line-height: 20px;
    white-space: nowrap;
}
.actions .btn {
    width: 137px;
}
.actions .long {
    width: 153px;
}
.right {
    display: flex;
    flex: 1;
    flex-direction: column;
    align-items: flex-start;
    gap: 6px;
    padding-top: 7px;
}
.right .btn {
    width: 82px;
}
.thickness {
    margin-top: auto;
    padding-left: 9px;
    font-size: 19px;
}
.thickness label {
    display: flex;
    align-items: center;
    gap: 9px;
    height: 32px;
}

/* gif recorder */
.gif {
    position: absolute;
    top: 134px;
    right: 0;
    width: 149px;
    border: 3px solid #03c;
    border-top: 0;
    border-right: 0;
    border-radius: 6px 0 0 0;
    background: #fff;
}
.gif-title {
    display: flex;
    align-items: center;
    height: 29px;
    margin-left: -3px;
    padding: 1px 2px 0 5px;
    border-radius: 6px 0 0 0;
    background: linear-gradient(#03c 1px, #39f 3px, #06c 6px, #05e 20px, #03c);
    color: #fff;
}
.gif-icon {
    width: 17px;
    height: 15px;
}
.gif-title h2 {
    flex: 1;
    margin-left: 3px;
    font: bold 13px/16px "Liberation Mono", monospace;
}
.xp button {
    background: linear-gradient(135deg, #69f, #36c 40%, #35e);
}
.xp .off {
    border-color: #69f;
    background: #36c;
}
.xp .off svg {
    stroke: #69f;
}
.xp .close {
    background: linear-gradient(135deg, #f96, #d42 50%, #c31);
}
.gif-menu {
    display: flex;
    gap: 12px;
    height: 18px;
    padding-left: 6px;
    background: #ffc;
    line-height: 18px;
}
.gif-menu .off {
    color: #999;
}
.gif-body {
    padding: 6px 3px 4px;
}
.user {
    height: 23px;
    margin: 0 0 3px 1px;
    border: 3px double #000;
    border-right: 0;
    border-left: 0;
    line-height: 17px;
    text-align: center;
}
.gif .btn {
    height: 23px;
    font-size: 12px;
    line-height: 16px;
}
.gif .btn:disabled {
    color: #999;
    text-shadow: 1px 1px #fff;
}
.gif-actions {
    display: flex;
    gap: 2px;
    margin-left: 1px;
}
.gif-actions .btn {
    width: 43px;
}
.frames {
    margin-bottom: 12px;
    word-break: keep-all;
    white-space: nowrap;
}
.gif h3 {
    display: flex;
    align-items: center;
    gap: 3px;
    margin-left: 1px;
    font-weight: normal;
}
.gif h3::before, .gif h3::after {
    content: "";
    width: 9px;
    height: 1px;
    background: #000;
}
.gif h3::after {
    flex: 1;
}
dl {
    display: grid;
    grid-template-columns: 90px 1fr;
    line-height: 14px;
    white-space: nowrap;
}
.region {
    display: flex;
    justify-content: space-between;
}
.region .btn, .refresh {
    width: 67px;
}
.check {
    display: flex;
    align-items: center;
    gap: 5px;
    height: 22px;
    padding-left: 2px;
    white-space: nowrap;
}
.check input {
    width: 15px;
    height: 15px;
    border: 1px solid #ffc;
    border-top: 2px solid #333;
    border-left: 2px solid #333;
    appearance: none;
}
.check input:checked::before {
    content: "";
    display: block;
    width: 9px;
    height: 5px;
    margin: 2px 1px;
    border: 2px solid #000;
    border-top: 0;
    border-right: 0;
    transform: rotate(-45deg);
}
.refresh {
    display: block;
    margin: 2px 0 18px 1px;
}
.pick {
    display: flex;
    align-items: center;
    gap: 3px;
    padding-bottom: 2px;
}
.pick select {
    width: 50px;
    height: 16px;
    padding-left: 10px;
    border: 1px solid #000;
    box-shadow: 1px 1px #000;
    appearance: none;
    background:
        conic-gradient(from -30deg at 50% 100%, #000 60deg, transparent 0) right 2px top 4px / 8px 7px no-repeat,
        #fff;
}
.pick .fps {
    width: 61px;
}

/* baidu floating bar */
.baidu {
    position: absolute;
    top: 703px;
    left: 248px;
    width: 302px;
    color: #06c;
}
.swoosh {
    width: 302px;
    height: 48px;
    background: #fff;
}
.baidu-bar {
    position: absolute;
    top: 3px;
    right: 3px;
    display: flex;
    color: #06c;
}
.pill {
    display: flex;
    align-items: center;
    justify-content: center;
    width: 22px;
    height: 17px;
    border: 1px solid #9cf;
    border-radius: 8px;
    background: linear-gradient(#cff 5px, #ccf 5px 8px, #9cf 8px 11px, #cff 11px);
}
.pill.name {
    gap: 4px;
    width: 68px;
    margin-right: 12px;
    padding-left: 8px;
    white-space: pre;
}
.pill .caret {
    border-width: 4px;
    border-bottom: 0;
    border-top-color: #69c;
}
.pill svg {
    width: 10px;
    height: 10px;
    fill: none;
    stroke: #06c;
}
.cursor {
    position: absolute;
    top: 415px;
    left: 354px;
    width: 12px;
    height: 21px;
}
```
